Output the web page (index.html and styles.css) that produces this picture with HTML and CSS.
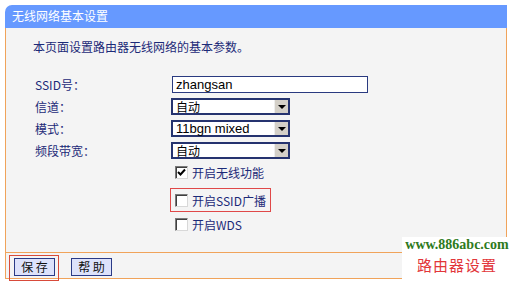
FILE: index.html
```html
<!DOCTYPE html>
<html lang="zh-CN">
<head>
    <meta charset="UTF-8">
    <title>无线网络基本设置</title>
    <link rel="stylesheet" href="styles.css">
</head>
<body>
    <div class="panel">
        <div class="title">无线网络基本设置</div>
        <div class="content">
            <p class="intro">本页面设置路由器无线网络的基本参数。</p>
            <div class="form">
                <label>SSID号：</label>
                <div class="text-input">zhangsan</div>
                <label>信道：</label>
                <div class="select"><span class="value">自动</span><span class="arrow"></span></div>
                <label>模式：</label>
                <div class="select"><span class="value latin">11bgn mixed</span><span class="arrow"></span></div>
                <label>频段带宽：</label>
                <div class="select"><span class="value">自动</span><span class="arrow"></span></div>
            </div>
            <div class="checks">
                <div class="check-row">
                    <span class="box">
                        <svg width="9" height="9" viewBox="0 0 9 9"><path d="M1 4 L3.5 6.5 L8 1.5" stroke="#000" stroke-width="2" fill="none"/></svg>
                    </span>
                    <span>开启无线功能</span>
                </div>
                <div class="check-row highlight">
                    <span class="box"></span>
                    <span>开启SSID广播</span>
                </div>
                <div class="check-row last">
                    <span class="box"></span>
                    <span>开启WDS</span>
                </div>
            </div>
        </div>
        <div class="footer">
            <div class="highlight-btn"><button>保 存</button></div>
            <button class="help">帮 助</button>
        </div>
    </div>
    <div class="watermark">
        <div class="site">www.886abc.com</div>
        <div class="brand">路由器设置</div>
    </div>
</body>
</html>
```

FILE: styles.css
```css
body {
    margin: 0;
    padding: 5px 0 0 5px;
    background: #fff;
    font-family: "Noto Sans CJK SC", "DejaVu Sans", sans-serif;
    font-size: 12px;
    color: #1c2a78;
    position: relative;
    width: 512px;
    height: 286px;
    box-sizing: border-box;
    overflow: hidden;
}
.panel {
    width: 502px;
}
.title {
    height: 23px;
    line-height: 22px;
    background: #6699ff;
    color: #fff;
    padding-left: 7px;
    border-top-left-radius: 7px;
}
.content {
    height: 224px;
    background: #f4f4f4;
    border-left: 1px solid #f0a35a;
    border-right: 1px solid #f0a35a;
    box-sizing: border-box;
    padding: 12px 0 0 27px;
}
.intro {
    margin: 0;
    line-height: 14px;
}
.form {
    display: grid;
    grid-template-columns: 138px auto;
    grid-auto-rows: 17px;
    row-gap: 5px;
    margin-top: 22px;
    align-items: center;
}
.form label {
    padding-left: 2px;
}
.text-input {
    width: 191px;
    height: 15px;
    margin-left: 1px;
    border: 1px solid #2a3a80;
    background: #fff;
    color: #000;
    font-family: "Liberation Sans", Arial, sans-serif;
    font-size: 13px;
    line-height: 15px;
    padding-left: 3px;
    box-sizing: content-box;
}
.select {
    width: 115px;
    height: 13px;
    border: 2px solid #25336f;
    background: #fff;
    color: #000;
    display: flex;
    align-items: center;
    justify-content: space-between;
}
.select .value {
    padding-left: 3px;
    font-size: 12px;
    line-height: 13px;
}
.select .latin {
    font-family: "Liberation Sans", Arial, sans-serif;
    font-size: 13px;
}
.arrow {
    width: 14px;
    height: 13px;
    background: #d4d0c8;
    border-left: 1px solid #eee;
    box-sizing: border-box;
    position: relative;
}
.arrow::after {
    content: "";
    position: absolute;
    left: 3px;
    top: 5px;
    border-left: 4px solid transparent;
    border-right: 4px solid transparent;
    border-top: 4px solid #000;
}
.checks {
    margin: 6px 0 0 142px;
    display: flex;
    flex-direction: column;
    align-items: flex-start;
}
.check-row {
    display: flex;
    align-items: center;
    gap: 4px;
    height: 14px;
    color: #1c2a78;
}
.check-row.highlight {
    margin-top: 9px;
    margin-left: -5px;
    padding: 4px 4px 4px 4px;
    border: 1px solid #e04848;
}
.check-row.last {
    margin-top: 5px;
}
.box {
    width: 11px;
    height: 11px;
    background: #fff;
    border-top: 1px solid #7a7a7a;
    border-left: 1px solid #7a7a7a;
    border-bottom: 1px solid #d8d8d8;
    border-right: 1px solid #d8d8d8;
    box-shadow: inset 1px 1px 0 #404040;
    display: flex;
    align-items: center;
    justify-content: center;
}
.footer {
    height: 27px;
    background: #f4f4f4;
    border: 1px solid #f0a35a;
    box-sizing: border-box;
    display: flex;
    align-items: flex-start;
    gap: 12px;
    padding: 2px 0 0 3px;
}
.highlight-btn {
    border: 1px solid #d84a3a;
    padding: 2px 3px 3px 4px;
    height: 19px;
}
.footer button {
    width: 41px;
    height: 18px;
    margin: 0;
    padding: 0;
    background: #dde2fb;
    border: 1px solid #2a3a86;
    color: #111;
    font-family: "Noto Sans CJK SC", sans-serif;
    font-size: 12px;
    line-height: 14px;
}
.footer .help {
    margin-top: 3px;
}
.watermark {
    position: absolute;
    left: 402px;
    top: 237px;
    width: 110px;
    height: 49px;
    background: #fff;
    text-align: center;
}
.site {
    font-family: "Liberation Serif", "Times New Roman", serif;
    font-weight: bold;
    font-size: 14px;
    color: #2e7a1c;
    line-height: 16px;
}
.brand {
    font-size: 15px;
    color: #e2363a;
    letter-spacing: 1px;
    line-height: 20px;
    margin-top: 2px;
}
```
